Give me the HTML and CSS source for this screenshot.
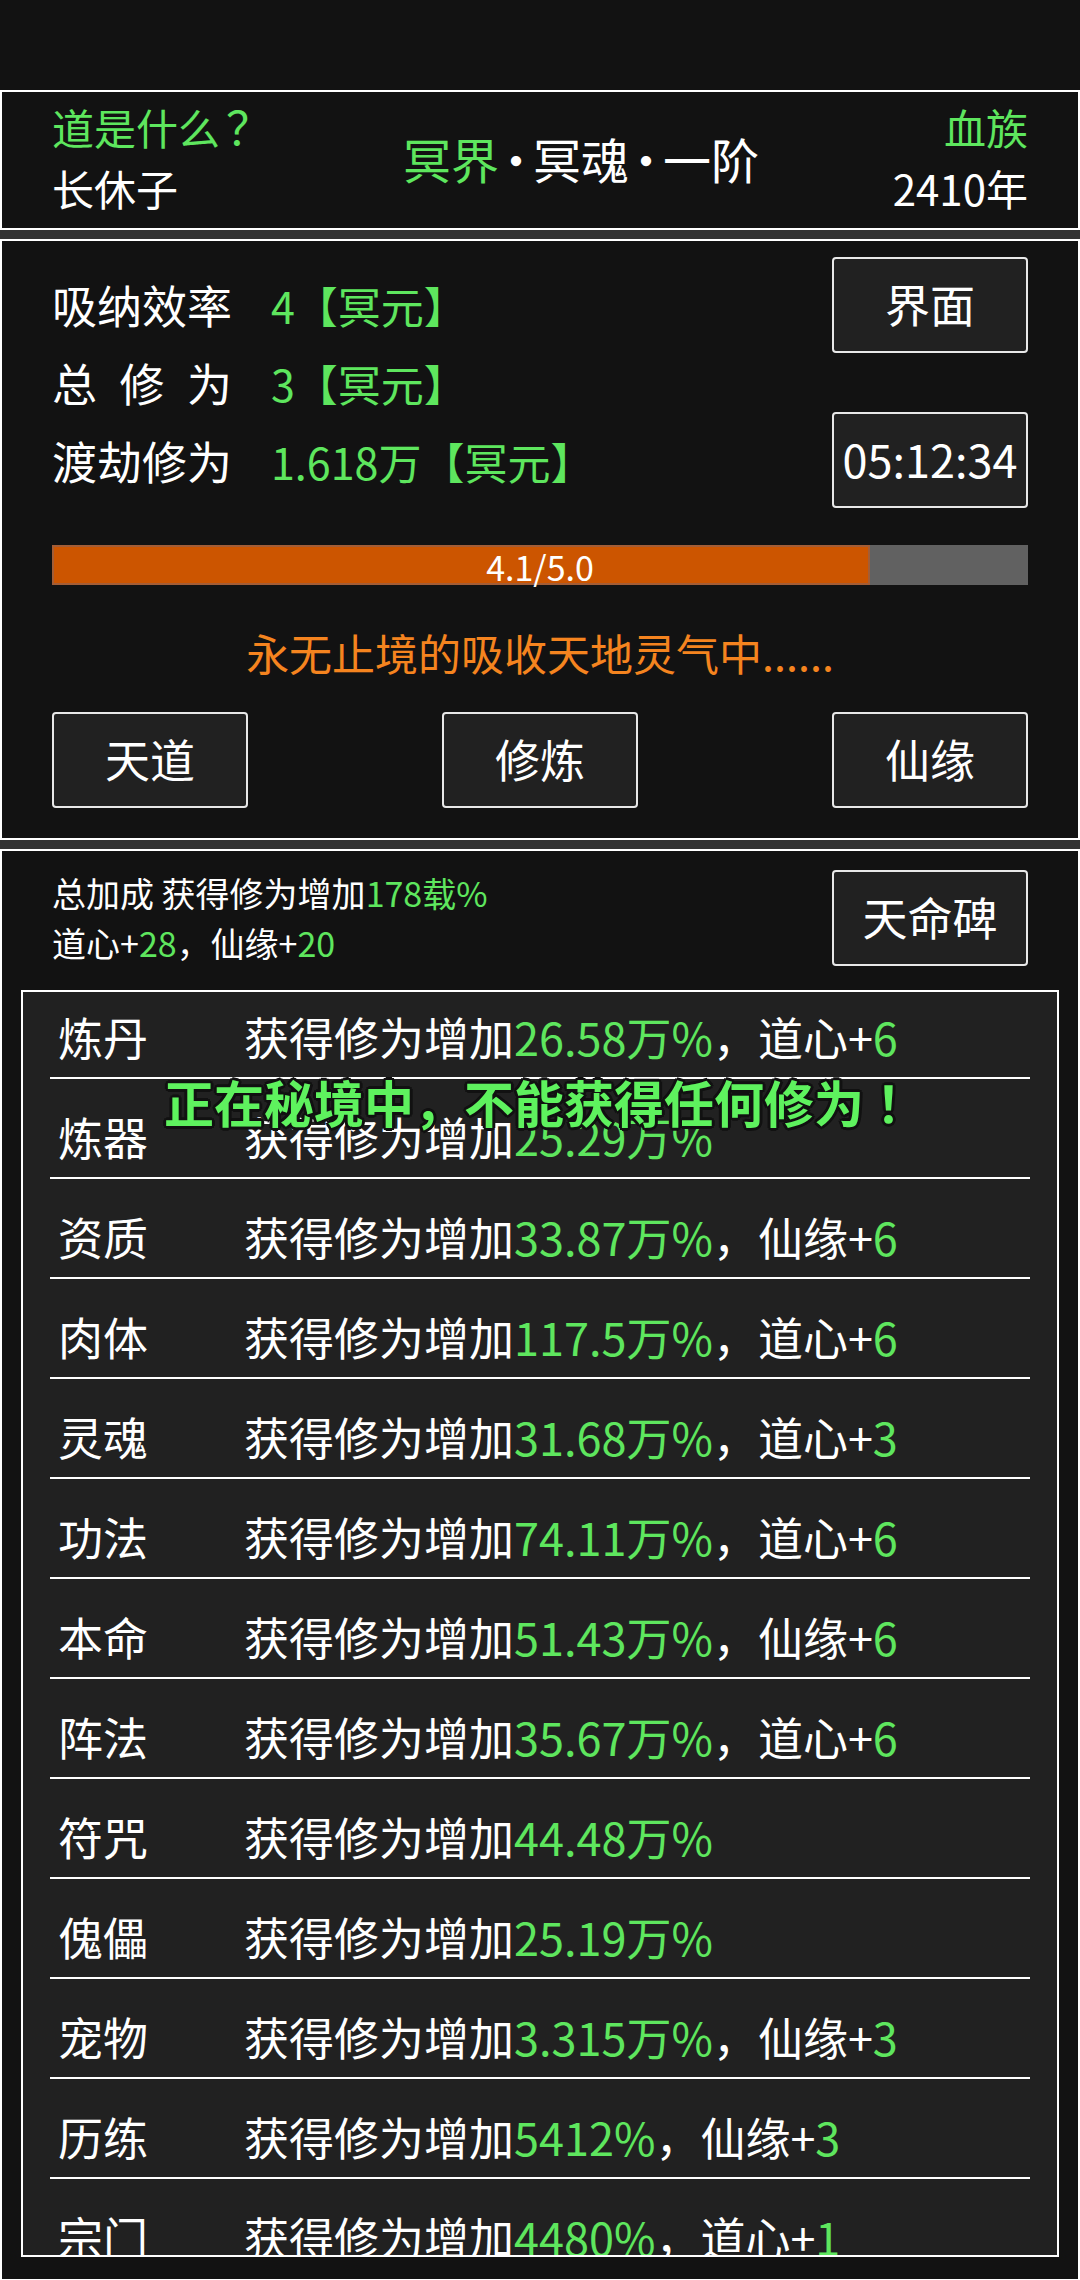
FILE: index.html
```html
<!DOCTYPE html>
<html lang="zh-CN">
<head>
<meta charset="utf-8">
<title>修仙</title>
<link rel="stylesheet" href="styles.css">
</head>
<body>
<div class="status"></div>

<header class="panel head">
  <div class="col left">
    <div class="green">道是什么<span class="qmark">？</span></div>
    <div>长休子</div>
  </div>
  <div class="title"><span class="green">冥界</span><span class="dot">·</span>冥魂<span class="dot">·</span>一阶</div>
  <div class="col right">
    <div class="green">血族</div>
    <div>2410年</div>
  </div>
</header>

<div class="gap"></div>

<section class="panel stats">
  <div class="top">
    <div class="rows">
      <div class="row"><span class="lbl">吸纳效率</span><span class="val green">4【冥元】</span></div>
      <div class="row"><span class="lbl">总&ensp;修&ensp;为</span><span class="val green">3【冥元】</span></div>
      <div class="row"><span class="lbl">渡劫修为</span><span class="val green">1.618万【冥元】</span></div>
    </div>
    <div class="side">
      <div class="btn">界面</div>
      <div class="btn timer">05:12:34</div>
    </div>
  </div>
  <div class="bar">
    <div class="fill" style="width:83.8%"></div>
    <span class="bar-text">4.1/5.0</span>
  </div>
  <div class="msg">永无止境的吸收天地灵气中......</div>
  <div class="actions">
    <div class="btn">天道</div>
    <div class="btn">修炼</div>
    <div class="btn">仙缘</div>
  </div>
</section>

<div class="gap"></div>

<section class="panel bonus">
  <div class="summary">
    <div class="lines">
      <div>总加成 获得修为增加<span class="green">178载%</span></div>
      <div>道心+<span class="green">28</span>，仙缘+<span class="green">20</span></div>
    </div>
    <div class="btn">天命碑</div>
  </div>
  <div class="list">
    <div class="list-inner">
      <div class="item"><span class="name">炼丹</span><span>获得修为增加<span class="green">26.58万%</span>，道心+<span class="green">6</span></span></div>
      <div class="item"><span class="name">炼器</span><span>获得修为增加<span class="green">25.29万%</span></span></div>
      <div class="item"><span class="name">资质</span><span>获得修为增加<span class="green">33.87万%</span>，仙缘+<span class="green">6</span></span></div>
      <div class="item"><span class="name">肉体</span><span>获得修为增加<span class="green">117.5万%</span>，道心+<span class="green">6</span></span></div>
      <div class="item"><span class="name">灵魂</span><span>获得修为增加<span class="green">31.68万%</span>，道心+<span class="green">3</span></span></div>
      <div class="item"><span class="name">功法</span><span>获得修为增加<span class="green">74.11万%</span>，道心+<span class="green">6</span></span></div>
      <div class="item"><span class="name">本命</span><span>获得修为增加<span class="green">51.43万%</span>，仙缘+<span class="green">6</span></span></div>
      <div class="item"><span class="name">阵法</span><span>获得修为增加<span class="green">35.67万%</span>，道心+<span class="green">6</span></span></div>
      <div class="item"><span class="name">符咒</span><span>获得修为增加<span class="green">44.48万%</span></span></div>
      <div class="item"><span class="name">傀儡</span><span>获得修为增加<span class="green">25.19万%</span></span></div>
      <div class="item"><span class="name">宠物</span><span>获得修为增加<span class="green">3.315万%</span>，仙缘+<span class="green">3</span></span></div>
      <div class="item"><span class="name">历练</span><span>获得修为增加<span class="green">5412%</span>，仙缘+<span class="green">3</span></span></div>
      <div class="item"><span class="name">宗门</span><span>获得修为增加<span class="green">4480%</span>，道心+<span class="green">1</span></span></div>
    </div>
    <div class="toast">正在秘境中，不能获得任何修为<span class="bang">！</span></div>
  </div>
</section>
</body>
</html>
```
FILE: styles.css
```css
* { box-sizing: border-box; }

html, body {
  margin: 0;
  padding: 0;
}

body {
  width: 1080px;
  height: 2280px;
  overflow: hidden;
  background: #333333;
  color: #ffffff;
  font-family: "Noto Sans CJK SC", "Noto Sans", sans-serif;
}

.green { color: #5ee65e; }

.status {
  height: 90px;
  background: #121212;
}

.gap { height: 9px; }

.panel {
  background: #121212;
  border: 2px solid #ffffff;
}

/* header */
.head {
  height: 140px;
  display: flex;
  align-items: center;
  padding: 0 50px 6px;
}

.col {
  font-size: 42px;
  line-height: 61px;
  white-space: nowrap;
}

.qmark {
  margin-left: 6px;
  font-size: 46px;
  line-height: 40px;
}

.col.left { flex: 0 0 351px; }

.col.right {
  flex: 1;
  text-align: right;
}

.title {
  font-size: 48px;
  line-height: 60px;
  white-space: nowrap;
  display: flex;
  margin-top: 2px;
}

.dot {
  display: inline-flex;
  justify-content: center;
  width: 34px;
}

/* stats */
.stats {
  height: 601px;
  padding: 16px 50px 0;
}

.top {
  display: flex;
  align-items: center;
  justify-content: space-between;
}

.row {
  display: flex;
  align-items: baseline;
  font-size: 45px;
  line-height: 77px;
  white-space: nowrap;
}

.lbl { width: 219px; }

.val { font-size: 43px; }

.side {
  display: flex;
  flex-direction: column;
  gap: 59px;
}

.btn {
  width: 196px;
  height: 96px;
  border: 2px solid #e8e8e8;
  border-radius: 4px;
  background: #212121;
  display: flex;
  align-items: center;
  justify-content: center;
  font-size: 45px;
  color: #ffffff;
  padding-bottom: 3px;
}

.bar {
  position: relative;
  height: 40px;
  margin-top: 37px;
  background: #616161;
  display: flex;
  align-items: center;
  justify-content: center;
}

.fill {
  position: absolute;
  left: 0;
  top: 0;
  bottom: 0;
  background: #cc5500;
  box-shadow: inset 0 0 0 2px #a35d36;
}

.bar-text {
  position: relative;
  font-size: 34px;
  line-height: 40px;
  margin-top: 3px;
}

.msg {
  margin-top: 37px;
  text-align: center;
  font-size: 43px;
  line-height: 60px;
  color: #f5841f;
}

.actions {
  margin-top: 30px;
  display: flex;
  justify-content: space-between;
}

/* bonus */
.bonus {
  height: 1432px;
  padding-top: 17px;
}

.summary {
  display: flex;
  align-items: center;
  justify-content: space-between;
  padding: 0 50px;
}

.lines {
  font-size: 34px;
  line-height: 50px;
  white-space: nowrap;
}

.list {
  position: relative;
  height: 1267px;
  margin: 22px 19px 0;
  border: 2px solid #ffffff;
  background: #212121;
  overflow: hidden;
}

.list-inner {
  margin-top: -13px;
  padding: 0 27px;
}

.item {
  display: flex;
  height: 100px;
  padding: 36px 0 0 8px;
  border-bottom: 2px solid #ffffff;
  font-size: 45px;
  line-height: 44px;
  white-space: nowrap;
}

.name { width: 186px; }

.toast {
  position: absolute;
  top: 79px;
  left: 10px;
  right: 0;
  text-align: center;
  font-size: 50px;
  line-height: 60px;
  font-weight: 700;
  color: #5ef25e;
  white-space: nowrap;
  text-shadow:
    3px 0 0 #111, -3px 0 0 #111, 0 3px 0 #111, 0 -3px 0 #111,
    2px 2px 0 #111, -2px 2px 0 #111, 2px -2px 0 #111, -2px -2px 0 #111;
}

.bang { margin-left: 12px; }
```
